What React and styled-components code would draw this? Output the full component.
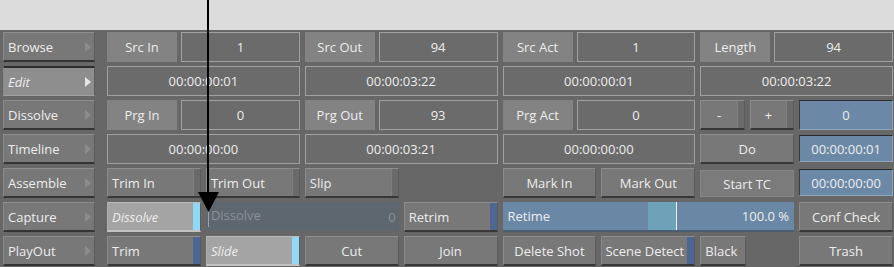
import React from 'react';
import styled, { createGlobalStyle, css } from 'styled-components';

const GlobalStyle = createGlobalStyle`
  html, body {
    margin: 0;
    padding: 0;
    background: #676767;
  }
  * { box-sizing: border-box; }
`;

const Page = styled.div`
  position: relative;
  width: 894px;
  height: 267px;
  overflow: hidden;
  background: #676767;
  font-family: "Open Sans", "DejaVu Sans", sans-serif;
  font-size: 13px;
  color: #ededed;
`;

const TopStrip = styled.div`
  height: 30px;
  background: #dcdcdc;
`;

const Panel = styled.div`
  display: flex;
  gap: 12px;
  padding: 2px 0 0 3px;
`;

const Nav = styled.div`
  display: grid;
  grid-template-rows: repeat(7, 30px);
  row-gap: 4px;
  width: 92px;
`;

const NavButton = styled.div`
  display: flex;
  align-items: center;
  justify-content: space-between;
  padding: 0 3px 0 4px;
  background: #787878;
  border-top: 1px solid #8e8e8e;
  border-left: 1px solid #8a8a8a;
  border-right: 1px solid #5c5c5c;
  border-bottom: 2px solid #343434;
  ${(p) => p.$active && css`
    background: #8e8e8e;
    font-style: italic;
    border-top: 2px solid #2e2e2e;
    border-bottom: 1px solid #a2a2a2;
  `}
`;

const NavArrow = styled.span`
  width: 0;
  height: 0;
  border-top: 5px solid transparent;
  border-bottom: 5px solid transparent;
  border-left: 6px solid ${(p) => (p.$active ? '#e6e6e6' : '#8c8c8c')};
`;

const Main = styled.div`
  display: grid;
  width: 786px;
  grid-template-columns: repeat(8, 1fr);
  grid-template-rows: repeat(7, 30px);
  column-gap: 5px;
  row-gap: 4px;
`;

const Pair = styled.div`
  grid-column: span 2;
  display: flex;
  gap: 4px;
`;

const Label = styled.div`
  flex: 0 0 70px;
  display: flex;
  align-items: center;
  justify-content: center;
  background: #838383;
`;

const Value = styled.div`
  flex: 1;
  display: flex;
  align-items: center;
  justify-content: center;
  background: #6b6b6b;
  border: 1px solid #a0a0a0;
`;

const Timecode = styled(Value)`
  grid-column: span 2;
`;

const Split = styled.div`
  display: flex;
  gap: 5px;
  & > * { flex: 1; min-width: 0; }
`;

const Spacer = styled.div``;

const stripTones = {
  gray: '#6a6a6a',
  blue: '#4c6892',
  cyan: '#8fd9f7',
};

const Button = styled.div`
  display: flex;
  align-items: stretch;
  min-width: 0;
  background: #787878;
  border-top: 1px solid #8e8e8e;
  border-left: 1px solid #8a8a8a;
  border-right: 1px solid #5c5c5c;
  border-bottom: 2px solid #383838;
  ${(p) => p.$span && css`grid-column: span ${p.$span};`}
  ${(p) => p.$selected && css`
    background: #a4a4a4;
    font-style: italic;
    border-top: 1px solid #bababa;
    border-left: 1px solid #b0b0b0;
    border-bottom: 2px solid #c2c2c2;
  `}
`;

const ButtonText = styled.span`
  flex: 1;
  display: flex;
  align-items: center;
  justify-content: ${(p) => (p.$align === 'left' ? 'flex-start' : 'center')};
  padding: ${(p) => (p.$align === 'left' ? '0 0 0 4px' : '0 1px')};
  white-space: nowrap;
  overflow: hidden;
`;

const Strip = styled.span`
  flex: 0 0 7px;
  background: ${(p) => stripTones[p.$tone]};
  border-left: 1px solid ${(p) => (p.$tone === 'gray' ? '#7e7e7e' : 'transparent')};
`;

const FlatLabel = styled.div`
  display: flex;
  align-items: center;
  justify-content: center;
  margin: 2px 0 1px;
  background: #7b7b7b;
  border: 1px solid #858585;
`;

const BlueField = styled.div`
  display: flex;
  align-items: center;
  justify-content: center;
  background: #6b89a7;
  border-top: 1px solid #2a2a2a;
  border-left: 1px solid #3c3c3c;
  border-right: 1px solid #8ea2b6;
  border-bottom: 1px solid #92a6ba;
  ${(p) => p.$inset && css`margin: 1px 0 2px;`}
`;

const DisabledField = styled.div`
  grid-column: span 2;
  display: flex;
  align-items: center;
  justify-content: space-between;
  padding: 0 3px 0 2px;
  background: #5e6670;
  color: #8b9197;
  margin-bottom: 1px;
`;

const Cursor = styled.span`
  display: inline-block;
  width: 1px;
  height: 20px;
  margin-right: 2px;
  background: #9aa2aa;
  vertical-align: middle;
`;

const RetimeBar = styled.div`
  grid-column: span 3;
  position: relative;
  display: flex;
  align-items: center;
  justify-content: space-between;
  padding: 0 5px 0 5px;
  background: #6a88a5;
  border-bottom: 2px solid #4a5c70;
`;

const RetimeMark = styled.div`
  position: absolute;
  top: 0;
  bottom: 0;
  left: ${(p) => p.$from}%;
  width: ${(p) => p.$to - p.$from}%;
  background: #6ea2b9;
  border-right: 1px solid #e8f4f8;
`;

const BarText = styled.span`
  position: relative;
`;

const Pointer = styled.svg`
  position: absolute;
  left: 0;
  top: 0;
  pointer-events: none;
`;

const navItems = ['Browse', 'Edit', 'Dissolve', 'Timeline', 'Assemble', 'Capture', 'PlayOut'];

function Btn({ children, strip, align = 'center', selected, span }) {
  return (
    <Button $selected={selected} $span={span}>
      <ButtonText $align={align}>{children}</ButtonText>
      {strip && <Strip $tone={strip} />}
    </Button>
  );
}

export default function App() {
  return (
    <Page>
      <GlobalStyle />
      <TopStrip />
      <Panel>
        <Nav>
          {navItems.map((name) => (
            <NavButton key={name} $active={name === 'Edit'}>
              <span>{name}</span>
              <NavArrow $active={name === 'Edit'} />
            </NavButton>
          ))}
        </Nav>
        <Main>
          {/* row 1 */}
          <Pair><Label>Src In</Label><Value>1</Value></Pair>
          <Pair><Label>Src Out</Label><Value>94</Value></Pair>
          <Pair><Label>Src Act</Label><Value>1</Value></Pair>
          <Pair><Label>Length</Label><Value>94</Value></Pair>

          {/* row 2 */}
          <Timecode>00:00:00:01</Timecode>
          <Timecode>00:00:03:22</Timecode>
          <Timecode>00:00:00:01</Timecode>
          <Timecode>00:00:03:22</Timecode>

          {/* row 3 */}
          <Pair><Label>Prg In</Label><Value>0</Value></Pair>
          <Pair><Label>Prg Out</Label><Value>93</Value></Pair>
          <Pair><Label>Prg Act</Label><Value>0</Value></Pair>
          <Split>
            <Btn strip="gray">-</Btn>
            <Btn strip="gray">+</Btn>
          </Split>
          <BlueField>0</BlueField>

          {/* row 4 */}
          <Timecode>00:00:00:00</Timecode>
          <Timecode>00:00:03:21</Timecode>
          <Timecode>00:00:00:00</Timecode>
          <Btn>Do</Btn>
          <BlueField $inset>00:00:00:01</BlueField>

          {/* row 5 */}
          <Btn strip="gray" align="left">Trim In</Btn>
          <Btn strip="gray" align="left">Trim Out</Btn>
          <Btn strip="gray" align="left">Slip</Btn>
          <Spacer />
          <Btn>Mark In</Btn>
          <Btn>Mark Out</Btn>
          <FlatLabel>Start TC</FlatLabel>
          <BlueField $inset>00:00:00:00</BlueField>

          {/* row 6 */}
          <Btn strip="cyan" align="left" selected>Dissolve</Btn>
          <DisabledField>
            <span><Cursor />Dissolve</span>
            <span>0</span>
          </DisabledField>
          <Btn strip="blue" align="left">Retrim</Btn>
          <RetimeBar>
            <RetimeMark $from={49.8} $to={59.8} />
            <BarText>Retime</BarText>
            <BarText>100.0 %</BarText>
          </RetimeBar>
          <Btn>Conf Check</Btn>

          {/* row 7 */}
          <Btn strip="blue" align="left">Trim</Btn>
          <Btn strip="cyan" align="left" selected>Slide</Btn>
          <Btn>Cut</Btn>
          <Btn>Join</Btn>
          <Btn>Delete Shot</Btn>
          <Btn strip="blue">Scene Detect</Btn>
          <Split>
            <Btn align="left">Black</Btn>
            <Spacer />
          </Split>
          <Btn>Trash</Btn>
        </Main>
      </Panel>
      <Pointer width="894" height="267" viewBox="0 0 894 267">
        <rect x="207" y="0" width="2" height="194" fill="#000" />
        <polygon points="198,192 219,192 208.5,212" fill="#000" />
      </Pointer>
    </Page>
  );
}
